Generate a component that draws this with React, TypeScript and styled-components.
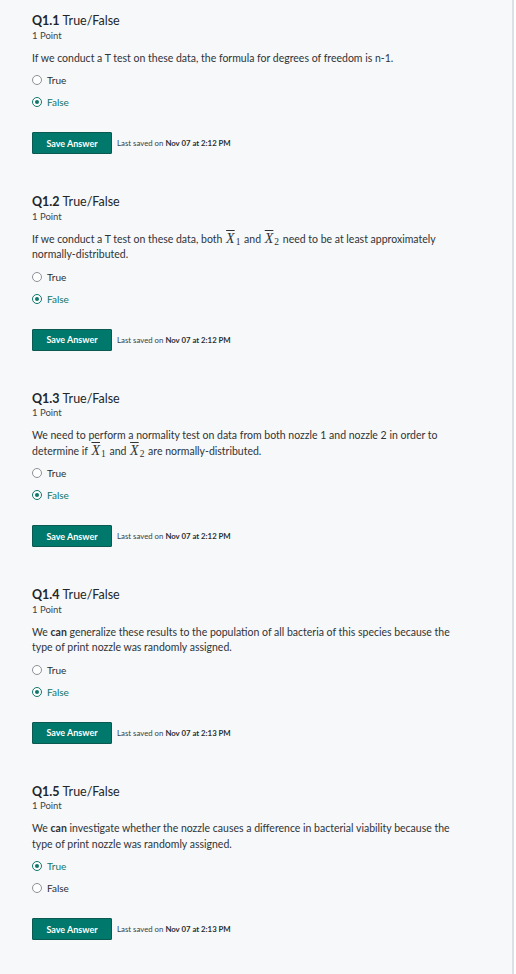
import React from "react";
import styled, { createGlobalStyle } from "styled-components";

const GlobalStyle = createGlobalStyle`
  html, body {
    margin: 0;
    padding: 0;
    background: #ffffff;
  }
  body {
    font-family: Lato, "Liberation Sans", sans-serif;
    color: #2f3437;
  }
`;

const Page = styled.main`
  width: 514px;
  min-height: 974px;
  box-sizing: border-box;
  padding: 14px 0 0 32px;
  background: #f7f8fa;
  border-right: 2px solid #dde0e6;
`;

const Question = styled.section`
  display: flex;
  flex-direction: column;
  padding-bottom: 41px;
`;

const Title = styled.h2`
  margin: 0;
  font-size: 12.5px;
  line-height: 14px;
  font-weight: 400;
  color: #222629;
`;

const Num = styled.strong`
  font-weight: 700;
  margin-right: 3px;
`;

const Points = styled.div`
  margin-top: 1.5px;
  font-size: 9.5px;
  line-height: 12px;
  color: #3c4347;
`;

const Prompt = styled.p`
  margin: 9px 0 0;
  width: 440px;
  font-size: 10.5px;
  line-height: 15.5px;
  color: #2f3437;
`;

const Math = styled.span`
  font-family: "Liberation Serif", "DejaVu Serif", serif;
  font-style: italic;
  font-size: 14px;
  line-height: 0;
  margin: 0 1px;
`;

const Bar = styled.span`
  text-decoration: overline;
  text-decoration-thickness: 1px;
`;

const Sub = styled.span`
  font-style: normal;
  font-size: 9.5px;
  vertical-align: -2px;
  margin-left: 1px;
`;

const Options = styled.div`
  margin-top: 3px;
  display: flex;
  flex-direction: column;
`;

const Option = styled.label<{ $on: boolean }>`
  display: flex;
  align-items: center;
  height: 22px;
  gap: 5px;
  font-size: 10px;
  color: ${(p) => (p.$on ? "#0f766b" : "#2a2f32")};
`;

const Radio = styled.span<{ $on: boolean }>`
  box-sizing: border-box;
  width: 10px;
  height: 10px;
  border-radius: 50%;
  border: 1.5px solid ${(p) => (p.$on ? "#0f766b" : "#8c9195")};
  background: #ffffff;
  display: flex;
  align-items: center;
  justify-content: center;
  &::after {
    content: "";
    width: 4px;
    height: 4px;
    border-radius: 50%;
    background: ${(p) => (p.$on ? "#0f766b" : "transparent")};
  }
`;

const Actions = styled.div`
  margin-top: 19px;
  display: flex;
  align-items: center;
  gap: 5px;
`;

const SaveButton = styled.button`
  box-sizing: border-box;
  width: 80px;
  height: 22px;
  padding: 0;
  border: 1px solid #0b5a52;
  border-radius: 1px;
  background: #00786c;
  color: #ffffff;
  font-family: Lato, "Liberation Sans", sans-serif;
  font-size: 9px;
  font-weight: 700;
  cursor: pointer;
`;

const Saved = styled.span`
  font-size: 7.8px;
  color: #3a4044;
  b {
    font-weight: 700;
    color: #2a2f32;
  }
`;

type Item = {
  n: string;
  prompt: React.ReactNode;
  answer: "True" | "False";
  time: string;
};

const X = ({ i }: { i: number }) => (
  <Math>
    <Bar>X</Bar>
    <Sub>{i}</Sub>
  </Math>
);

const items: Item[] = [
  {
    n: "Q1.1",
    prompt: "If we conduct a T test on these data, the formula for degrees of freedom is n-1.",
    answer: "False",
    time: "2:12 PM",
  },
  {
    n: "Q1.2",
    prompt: (
      <>
        If we conduct a T test on these data, both <X i={1} /> and <X i={2} /> need to be at least
        approximately normally-distributed.
      </>
    ),
    answer: "False",
    time: "2:12 PM",
  },
  {
    n: "Q1.3",
    prompt: (
      <>
        We need to perform a normality test on data from both nozzle 1 and nozzle 2 in order to
        determine if <X i={1} /> and <X i={2} /> are normally-distributed.
      </>
    ),
    answer: "False",
    time: "2:12 PM",
  },
  {
    n: "Q1.4",
    prompt: (
      <>
        We <b>can</b> generalize these results to the population of all bacteria of this species
        because the type of print nozzle was randomly assigned.
      </>
    ),
    answer: "False",
    time: "2:13 PM",
  },
  {
    n: "Q1.5",
    prompt: (
      <>
        We <b>can</b> investigate whether the nozzle causes a difference in bacterial viability
        because the type of print nozzle was randomly assigned.
      </>
    ),
    answer: "True",
    time: "2:13 PM",
  },
];

export default function App() {
  return (
    <>
      <GlobalStyle />
      <Page>
        {items.map((q) => (
          <Question key={q.n}>
            <Title>
              <Num>{q.n}</Num>True/False
            </Title>
            <Points>1 Point</Points>
            <Prompt>{q.prompt}</Prompt>
            <Options>
              {(["True", "False"] as const).map((o) => (
                <Option key={o} $on={q.answer === o}>
                  <Radio $on={q.answer === o} />
                  {o}
                </Option>
              ))}
            </Options>
            <Actions>
              <SaveButton type="button">Save Answer</SaveButton>
              <Saved>
                Last saved on <b>Nov 07 at {q.time}</b>
              </Saved>
            </Actions>
          </Question>
        ))}
      </Page>
    </>
  );
}
